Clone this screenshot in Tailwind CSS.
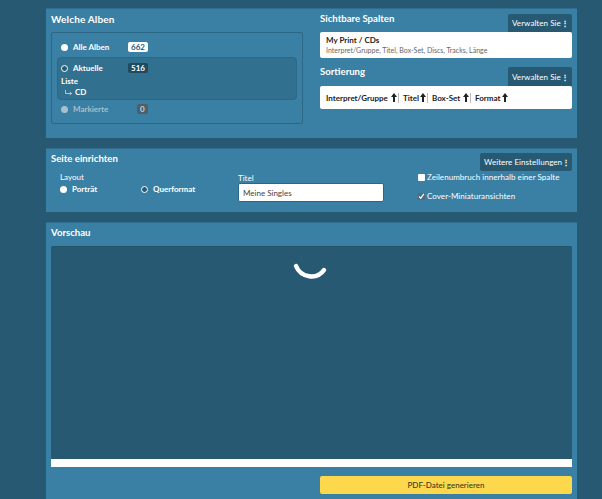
<!DOCTYPE html>
<html lang="en">
<head>
  <meta charset="UTF-8">
  <title>Drucken</title>
  <script src="https://cdn.jsdelivr.net/npm/@tailwindcss/browser@4"></script>
</head>
<body class="bg-[#275a72] text-white font-['Lato',sans-serif] h-[499px] overflow-hidden pl-[46px] pr-[25px] pt-[8px]">

  <!-- welche alben + spalten -->
  <section class="bg-[#3a7fa4] h-[130px] border-t border-[#2f6c8d] flex pl-[5px] pr-[5px]">
    <div class="w-[252px]">
      <h2 class="text-[10px] tracking-[0.15px] font-bold h-[23px] pt-[3px] leading-[14px]">Welche Alben</h2>
      <div class="h-[92px] border border-[#2c6785] rounded-[2px] px-[5px] pt-[6px]">
        <div class="flex items-center h-[16px] pl-[4px] text-[8px] font-bold">
          <span class="w-[7px] h-[7px] rounded-full bg-white"></span>
          <span class="ml-[5px] w-[55px]">Alle Alben</span>
          <span class="bg-white text-[#275a72] rounded-[2px] px-[3px] leading-[10px]">662</span>
        </div>
        <div class="bg-[#31708f] border border-[#2c6785] rounded-[4px] h-[43px] mt-[2px] pl-[3px] pt-[3px] text-[8px] font-bold">
          <div class="flex items-center h-[14px]">
            <span class="w-[7px] h-[7px] rounded-full border border-white bg-[#275a72]"></span>
            <span class="ml-[5px] w-[55px]">Aktuelle</span>
            <span class="bg-[#1f4b61] rounded-[2px] px-[3px] leading-[10px]">516</span>
          </div>
          <div class="leading-[11px] mt-[1px]">Liste</div>
          <div class="flex items-center leading-[11px] pl-[4px] gap-[3px]">
            <svg width="7" height="6" viewBox="0 0 7 6" fill="none" stroke="#dcebf2" stroke-width="0.700"><path d="M0.500 0 V3.500 H6.500 M4.800 1.800 L6.500 3.500 L4.800 5.200"/></svg>
            <span>CD</span>
          </div>
        </div>
        <div class="flex items-center h-[16px] mt-[1px] pl-[4px] text-[8px] font-bold text-[#a9c0cc]">
          <span class="w-[7px] h-[7px] rounded-full bg-[#a9c0cc]"></span>
          <span class="ml-[5px] w-[64px]">Markierte</span>
          <span class="bg-[#4d5f6b] text-[#c8d3d9] rounded-[2px] px-[3px] leading-[10px]">0</span>
        </div>
      </div>
    </div>
    <div class="w-[252px] ml-[17px]">
      <div class="flex justify-between items-end h-[23px]">
        <h2 class="text-[9.600px] font-bold self-start pt-[3px] leading-[14px]">Sichtbare Spalten</h2>
        <button class="bg-[#275a72] rounded-t-[2px] h-[18px] w-[64px] px-[4px] text-[8px] tracking-[0.05px] whitespace-nowrap flex items-center justify-between"><span>Verwalten Sie</span><span class="font-bold">⋮</span></button>
      </div>
      <div class="bg-white rounded-[2px] h-[26px] text-[#222] px-[6px] pt-[3px]">
        <div class="text-[8px] font-bold leading-[11px]">My Print / CDs</div>
        <div class="text-[7px] text-[#666] leading-[9px]">Interpret/Gruppe, Titel, Box-Set, Discs, Tracks, Länge</div>
      </div>
      <div class="flex justify-between items-end h-[28px]">
        <h2 class="text-[9.600px] font-bold self-start pt-[7px] leading-[14px]">Sortierung</h2>
        <button class="bg-[#275a72] rounded-t-[2px] h-[19px] w-[64px] px-[4px] text-[8px] tracking-[0.05px] whitespace-nowrap flex items-center justify-between"><span>Verwalten Sie</span><span class="font-bold">⋮</span></button>
      </div>
      <div class="bg-white rounded-[2px] h-[23px] text-[#222] px-[6px] flex items-center text-[8px] font-bold whitespace-nowrap">
        <span class="w-[63px]">Interpret/Gruppe</span>
        <svg class="ml-[2px]" width="6" height="9" viewBox="0 0 6 9" fill="#222"><path d="M3 0 L6 4 L4 4 L4 9 L2 9 L2 4 L0 4 Z"/></svg>
        <span class="h-[10px] border-l border-[#bbb] ml-[1px] mr-[4px]"></span>
        <span class="w-[15px]">Titel</span>
        <svg class="ml-[2px]" width="6" height="9" viewBox="0 0 6 9" fill="#222"><path d="M3 0 L6 4 L4 4 L4 9 L2 9 L2 4 L0 4 Z"/></svg>
        <span class="h-[10px] border-l border-[#bbb] ml-[1px] mr-[4px]"></span>
        <span class="w-[28px]">Box-Set</span>
        <svg class="ml-[3px]" width="6" height="9" viewBox="0 0 6 9" fill="#222"><path d="M3 0 L6 4 L4 4 L4 9 L2 9 L2 4 L0 4 Z"/></svg>
        <span class="h-[10px] border-l border-[#bbb] ml-[1px] mr-[4px]"></span>
        <span class="w-[24px]">Format</span>
        <svg class="ml-[3px]" width="6" height="9" viewBox="0 0 6 9" fill="#222"><path d="M3 0 L6 4 L4 4 L4 9 L2 9 L2 4 L0 4 Z"/></svg>
      </div>
    </div>
  </section>

  <!-- seite einrichten -->
  <section class="bg-[#3a7fa4] h-[64px] mt-[10px] border-t border-[#2f6c8d] flex pl-[5px] pr-[5px] relative">
    <div class="w-[187px]">
      <h2 class="text-[9.600px] font-bold pt-[3px] leading-[14px]">Seite einrichten</h2>
      <div class="pl-[9px] pt-[6px] text-[8px]">
        <div class="leading-[11px]">Layout</div>
        <div class="flex items-center font-bold leading-[11px] mt-[1px]">
          <span class="w-[7px] h-[7px] rounded-full bg-white"></span>
          <span class="ml-[5px] w-[69px]">Porträt</span>
          <span class="w-[7px] h-[7px] rounded-full border border-white bg-[#275a72]"></span>
          <span class="ml-[5px]">Querformat</span>
        </div>
      </div>
    </div>
    <div class="w-[146px] pt-[24px]">
      <label class="block text-[8px] leading-[10px]">Titel</label>
      <input value="Meine Singles" class="block bg-white text-[#444] text-[8px] rounded-[2px] h-[19px] w-full px-[4px] border border-[#2c6785]">
    </div>
    <div class="flex-1 relative">
      <button class="absolute right-0 top-[4px] bg-[#275a72] rounded-[2px] h-[18px] w-[92px] px-[4px] text-[8px] tracking-[0.05px] whitespace-nowrap flex items-center justify-between"><span>Weitere Einstellungen</span><span class="font-bold">⋮</span></button>
      <label class="absolute left-[34px] top-[23px] flex items-center gap-[2px] text-[8px] tracking-[0.05px] leading-[10px] whitespace-nowrap"><span class="w-[7px] h-[7px] bg-white rounded-[1px]"></span>Zeilenumbruch innerhalb einer Spalte</label>
      <label class="absolute left-[34px] top-[42px] flex items-center gap-[2px] text-[8px] tracking-[0.05px] leading-[10px] whitespace-nowrap">
        <span class="w-[7px] h-[7px] bg-[#4d6a80] rounded-[1px] flex">
          <svg width="7" height="7" viewBox="0 0 7 7" fill="none" stroke="#fff" stroke-width="1.200"><path d="M1.200 3.500 L2.800 5.300 L5.800 0.800"/></svg>
        </span>Cover-Miniaturansichten</label>
    </div>
  </section>

  <!-- vorschau -->
  <section class="bg-[#3a7fa4] h-[280px] mt-[10px] border-t border-[#2f6c8d] px-[5px]">
    <h2 class="text-[9.600px] font-bold pt-[3px] leading-[14px] h-[23px]">Vorschau</h2>
    <div class="bg-[#275a72] border-t border-[#235269] rounded-t-[2px] h-[213px] flex justify-center pt-[14px]">
      <svg class="-ml-[3px]" width="38" height="24" viewBox="0 0 38 24" fill="none"><path d="M5 5 C10 17 26 19 33 9" stroke="#fff" stroke-width="4.500" stroke-linecap="round"/></svg>
    </div>
    <div class="bg-white h-[8px]"></div>
    <div class="flex justify-end mt-[9px]">
      <button class="bg-[#fdd84d] text-[#3d3a20] rounded-[2px] h-[18px] w-[252px] text-[8px] font-medium">PDF-Datei generieren</button>
    </div>
  </section>
</body>
</html>
